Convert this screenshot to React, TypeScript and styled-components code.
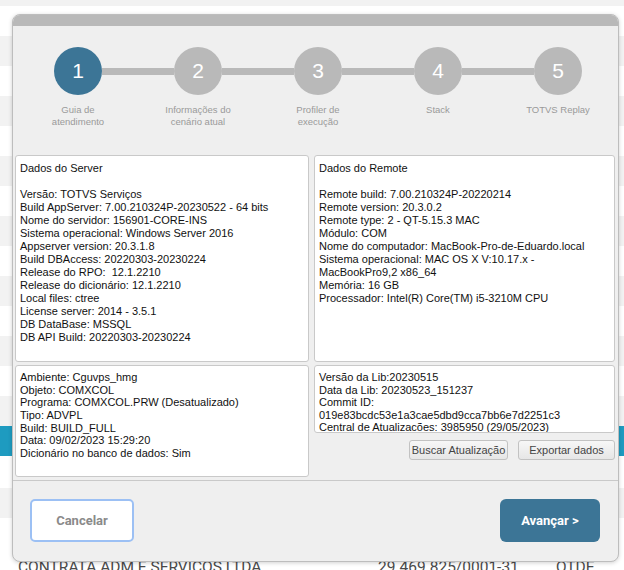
import React from "react";
import styled, { createGlobalStyle } from "styled-components";

const Global = createGlobalStyle`
  html, body { margin: 0; padding: 0; background: #ffffff; }
  body { font-family: "Liberation Sans", Arial, sans-serif; }
  * { box-sizing: border-box; }
`;

const Page = styled.div`
  position: relative;
  width: 624px;
  height: 570px;
  overflow: hidden;
`;

/* ---------- background list ---------- */
const BgList = styled.div`
  display: flex;
  flex-direction: column;
`;

const BgRow = styled.div<{ $tone: "white" | "gray" | "teal"; $h: number }>`
  height: ${(p) => p.$h}px;
  background: ${(p) =>
    p.$tone === "gray" ? "#f2f2f2" : p.$tone === "teal" ? "#1e9bc0" : "#ffffff"};
  display: flex;
  align-items: flex-start;
  font-family: Roboto, "Liberation Sans", sans-serif;
  font-size: 15.5px;
  line-height: 18px;
  color: #4a4a4a;
`;

const BgCell = styled.span<{ $w: number; $pl?: number }>`
  width: ${(p) => p.$w}px;
  padding-left: ${(p) => p.$pl ?? 0}px;
  padding-top: 10px;
  white-space: nowrap;
`;

/* ---------- dialog ---------- */
const Dialog = styled.div`
  position: absolute;
  left: 12px;
  top: 14px;
  width: 607px;
  height: 548px;
  background: #efefef;
  border: 1px solid #bdbdbd;
  border-radius: 8px;
  box-shadow: 0 1px 4px rgba(0, 0, 0, 0.18);
  overflow: hidden;
  display: flex;
  flex-direction: column;
`;

const TitleBand = styled.div`
  height: 11px;
  background: #b9b9b9;
  flex: none;
`;

const Stepper = styled.div`
  width: 600px;
  margin-left: 5px;
  padding-top: 21px;
  flex: none;
`;

const CircleRow = styled.div`
  display: flex;
  align-items: center;
  justify-content: center;
`;

const Circle = styled.div<{ $active?: boolean }>`
  width: 48px;
  height: 48px;
  border-radius: 50%;
  background: ${(p) => (p.$active ? "#3c7596" : "#b9b9b9")};
  color: #ffffff;
  display: flex;
  align-items: center;
  justify-content: center;
  font-family: "Liberation Sans", Arial, sans-serif;
  font-size: 21px;
  flex: none;
`;

const Connector = styled.div`
  width: 72px;
  height: 7px;
  background: #b9b9b9;
  flex: none;
`;

const LabelRow = styled.div`
  display: grid;
  grid-template-columns: repeat(5, 120px);
  margin-top: 9px;
`;

const StepLabel = styled.div`
  text-align: center;
  font-family: "Liberation Sans", Arial, sans-serif;
  font-size: 9.5px;
  line-height: 12px;
  color: #9a9a9a;
`;

const Panels = styled.div`
  display: grid;
  grid-template-columns: 294px 301px;
  column-gap: 5px;
  margin-top: 27px;
  padding-left: 2px;
  flex: none;
`;

const Column = styled.div`
  display: flex;
  flex-direction: column;
  gap: 3px;
`;

const Panel = styled.div<{ $h: number; $pt?: number; $lh?: number }>`
  height: ${(p) => p.$h}px;
  background: #ffffff;
  border: 1px solid #c9c9c9;
  border-radius: 3px;
  padding: ${(p) => p.$pt ?? 6}px 4px 0 4px;
  overflow: hidden;
  font-family: "Liberation Sans", Arial, sans-serif;
  font-size: 11px;
  line-height: ${(p) => p.$lh ?? 12.65}px;
  color: #111111;
  white-space: pre;
`;

const Line = styled.div`
  min-height: 1lh;
`;

const ActionRow = styled.div`
  display: flex;
  justify-content: flex-end;
  gap: 10px;
  margin-top: 4px;
`;

const SmallButton = styled.button<{ $w: number }>`
  width: ${(p) => p.$w}px;
  height: 20px;
  padding: 0;
  background: linear-gradient(#f7f7f7, #e6e6e6);
  border: 1px solid #c2c2c2;
  border-radius: 3px;
  font-family: "Liberation Sans", Arial, sans-serif;
  font-size: 11px;
  color: #444444;
`;

const Footer = styled.div`
  margin-top: auto;
  height: 81px;
  border-top: 1px solid #c9c9c9;
  display: flex;
  justify-content: space-between;
  align-items: flex-start;
  padding: 18px 18px 0 17px;
`;

const CancelButton = styled.button`
  width: 104px;
  height: 43px;
  background: #ffffff;
  border: 2px solid #9cc0f4;
  border-radius: 5px;
  font-family: Roboto, "Liberation Sans", sans-serif;
  font-weight: 700;
  font-size: 13px;
  color: #8a8a8a;
`;

const NextButton = styled.button`
  width: 100px;
  height: 43px;
  background: #3c7596;
  border: none;
  border-radius: 6px;
  font-family: Roboto, "Liberation Sans", sans-serif;
  font-weight: 700;
  font-size: 13px;
  color: #ffffff;
`;

const steps = [
  ["Guia de", "atendimento"],
  ["Informações do", "cenário atual"],
  ["Profiler de", "execução"],
  ["Stack"],
  ["TOTVS Replay"],
];

const serverLines = [
  "Dados do Server",
  "",
  "Versão: TOTVS Serviços",
  "Build AppServer: 7.00.210324P-20230522 - 64 bits",
  "Nome do servidor: 156901-CORE-INS",
  "Sistema operacional: Windows Server 2016",
  "Appserver version: 20.3.1.8",
  "Build DBAccess: 20220303-20230224",
  "Release do RPO:  12.1.2210",
  "Release do dicionário: 12.1.2210",
  "Local files: ctree",
  "License server: 2014 - 3.5.1",
  "DB DataBase: MSSQL",
  "DB API Build: 20220303-20230224",
];

const remoteLines = [
  "Dados do Remote",
  "",
  "Remote build: 7.00.210324P-20220214",
  "Remote version: 20.3.0.2",
  "Remote type: 2 - QT-5.15.3 MAC",
  "Módulo: COM",
  "Nome do computador: MacBook-Pro-de-Eduardo.local",
  "Sistema operacional: MAC OS X V:10.17.x -",
  "MacBookPro9,2 x86_64",
  "Memória: 16 GB",
  "Processador: Intel(R) Core(TM) i5-3210M CPU",
];

const envLines = [
  "Ambiente: Cguvps_hmg",
  "Objeto: COMXCOL",
  "Programa: COMXCOL.PRW (Desatualizado)",
  "Tipo: ADVPL",
  "Build: BUILD_FULL",
  "Data: 09/02/2023 15:29:20",
  "Dicionário no banco de dados: Sim",
];

const libLines = [
  "Versão da Lib:20230515",
  "Data da Lib: 20230523_151237",
  "Commit ID:",
  "019e83bcdc53e1a3cae5dbd9cca7bb6e7d2251c3",
  "Central de Atualizacões: 3985950 (29/05/2023)",
];

const bgRows: { tone: "white" | "gray" | "teal"; h: number }[] = [
  { tone: "gray", h: 6 },
  ...Array.from({ length: 14 }, (_, i) => ({
    tone: (i % 2 === 0 ? "white" : "gray") as "white" | "gray",
    h: 30,
  })),
  { tone: "teal", h: 30 },
  { tone: "white", h: 32 },
  { tone: "gray", h: 30 },
  { tone: "white", h: 30 },
];

export default function App() {
  return (
    <Page>
      <Global />
      <BgList>
        {bgRows.map((r, i) => (
          <BgRow key={i} $tone={r.tone} $h={r.h} />
        ))}
        <BgRow $tone="white" $h={40}>
          <BgCell $w={378} $pl={18}>
            CONTRATA ADM E SERVIÇOS LTDA
          </BgCell>
          <BgCell $w={178}>29.469.825/0001-31</BgCell>
          <BgCell $w={60}>QTDE</BgCell>
        </BgRow>
      </BgList>

      <Dialog>
        <TitleBand />
        <Stepper>
          <CircleRow>
            {steps.map((_, i) => (
              <React.Fragment key={i}>
                {i > 0 && <Connector />}
                <Circle $active={i === 0}>{i + 1}</Circle>
              </React.Fragment>
            ))}
          </CircleRow>
          <LabelRow>
            {steps.map((s, i) => (
              <StepLabel key={i}>
                {s.map((l, j) => (
                  <div key={j}>{l}</div>
                ))}
              </StepLabel>
            ))}
          </LabelRow>
        </Stepper>

        <Panels>
          <Column>
            <Panel $h={207} $lh={13}>
              {serverLines.map((l, i) => (
                <Line key={i}>{l}</Line>
              ))}
            </Panel>
            <Panel $h={112} $pt={5}>
              {envLines.map((l, i) => (
                <Line key={i}>{l}</Line>
              ))}
            </Panel>
          </Column>
          <Column>
            <Panel $h={207} $lh={13}>
              {remoteLines.map((l, i) => (
                <Line key={i}>{l}</Line>
              ))}
            </Panel>
            <Panel $h={68} $pt={5} $lh={12.5}>
              {libLines.map((l, i) => (
                <Line key={i}>{l}</Line>
              ))}
            </Panel>
            <ActionRow>
              <SmallButton $w={99}>Buscar Atualização</SmallButton>
              <SmallButton $w={97}>Exportar dados</SmallButton>
            </ActionRow>
          </Column>
        </Panels>

        <Footer>
          <CancelButton>Cancelar</CancelButton>
          <NextButton>Avançar &gt;</NextButton>
        </Footer>
      </Dialog>
    </Page>
  );
}
